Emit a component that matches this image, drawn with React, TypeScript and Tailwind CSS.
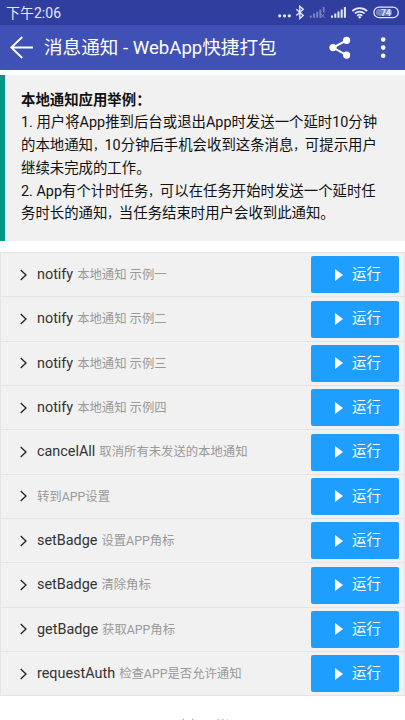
type Demo = {
  name?: string;
  desc: string;
};

const demos: Demo[] = [
  { name: 'notify', desc: '本地通知 示例一' },
  { name: 'notify', desc: '本地通知 示例二' },
  { name: 'notify', desc: '本地通知 示例三' },
  { name: 'notify', desc: '本地通知 示例四' },
  { name: 'cancelAll', desc: '取消所有未发送的本地通知' },
  { desc: '转到APP设置' },
  { name: 'setBadge', desc: '设置APP角标' },
  { name: 'setBadge', desc: '清除角标' },
  { name: 'getBadge', desc: '获取APP角标' },
  { name: 'requestAuth', desc: '检查APP是否允许通知' },
];

function StatusBar() {
  return (
    <div className="flex h-[25px] items-center bg-[#303f9f] pl-[6px] text-[#e4e8fb]">
      <span className="flex-1 text-[14px] leading-[26px]">下午2:06</span>
      <svg className="h-[25px] w-[135px]" viewBox="0 0 135 25" fill="currentColor">
        <circle cx="9.7" cy="15.8" r="1.6" />
        <circle cx="14.5" cy="15.8" r="1.6" />
        <circle cx="19.3" cy="15.8" r="1.6" />
        <path d="M26.4 9.2l6.8 6.2-3.4 3V6.2l3.4 3-6.8 6.2" fill="none" stroke="currentColor" strokeWidth="1.4" />
        <g opacity="0.4">
          <path d="M39.8 15.6h2v2.2h-2zM43 13.6h2v4.2h-2zM46.2 11.8h2v6h-2zM49.4 9.6h1.8v8.2h-1.8zM52.8 7h1.7v5.5h-1.7z" />
          <path d="M50.8 13.8l3.6 4M54.4 13.8l-3.6 4" stroke="currentColor" strokeWidth="1" />
        </g>
        <path d="M61 15.6h2v2.2h-2zM64.3 13.6h2v4.2h-2zM67.5 11.6h2v6.2h-2zM70.7 9.4h2v8.4h-2zM73.9 7h2v10.8h-2z" />
        <g fill="none" stroke="currentColor" strokeWidth="1.7">
          <path d="M82.3 11.1a10.6 10.6 0 0 1 14.8 0" />
          <path d="M84.8 13.5a7.1 7.1 0 0 1 9.8 0" />
          <path d="M87.2 15.8a3.7 3.7 0 0 1 5 0" />
        </g>
        <circle cx="89.7" cy="17.2" r="1.2" />
        <rect x="103.9" y="7.1" width="24.4" height="10.6" rx="5.3" fill="none" stroke="currentColor" strokeWidth="1.3" />
        <rect x="106" y="9" width="16" height="6.8" rx="3" opacity="0.4" />
        <text x="116" y="15.6" textAnchor="middle" fontSize="8.5" fontWeight="700">74</text>
      </svg>
    </div>
  );
}

function AppBar() {
  return (
    <header className="flex h-[45px] items-center bg-[#3f51b5] text-white">
      <svg className="h-[45px] w-[44px]" viewBox="0 0 44 45" fill="none" stroke="currentColor" strokeWidth="1.8">
        <path d="M22.3 12L11.3 22.5l11 10.5M11.3 22.5H33" />
      </svg>
      <h1 className="flex-1 whitespace-nowrap pt-[2px] text-[18.6px]">消息通知 - WebApp快捷打包</h1>
      <svg className="h-[45px] w-[85px]" viewBox="0 0 85 45" fill="currentColor">
        <path d="M26.5 15.3L13 22.6l13.5 7.6" fill="none" stroke="currentColor" strokeWidth="1.9" />
        <circle cx="26.6" cy="15.3" r="3.6" />
        <circle cx="13" cy="22.6" r="3.6" />
        <circle cx="26.6" cy="30.1" r="3.6" />
        <circle cx="63.2" cy="14.5" r="2.3" />
        <circle cx="63.2" cy="22.6" r="2.3" />
        <circle cx="63.2" cy="30.8" r="2.3" />
      </svg>
    </header>
  );
}

// full-width comma set slightly narrower than the text around it
function Comma() {
  return <span className="text-[11.5px] leading-none">，</span>;
}

function Notice() {
  return (
    <section className="mt-[4.5px] h-[166.5px] whitespace-nowrap border-l-[5px] border-[#009688] bg-[#f1f1f1] pl-4 pt-[15px] text-[14.4px] leading-[22.75px] text-[#111]">
      <p className="font-bold">本地通知应用举例：</p>
      <p>1. 用户将App推到后台或退出App时发送一个延时10分钟</p>
      <p>的本地通知<Comma />10分钟后手机会收到这条消息<Comma />可提示用户</p>
      <p>继续未完成的工作。</p>
      <p>2. App有个计时任务<Comma />可以在任务开始时发送一个延时任</p>
      <p>务时长的通知<Comma />当任务结束时用户会收到此通知。</p>
    </section>
  );
}

function DemoRow({ name, desc }: Demo) {
  return (
    <li className="flex h-[44.35px] items-center border-b border-[#e4e4e4] pl-[19px] pr-[5px]">
      <svg className="mr-[10px] h-3 w-[7px]" viewBox="0 0 7 12" fill="none" stroke="#222" strokeWidth="1.3">
        <path d="M.7 1l5.3 5-5.3 5" />
      </svg>
      <div className="flex-1 whitespace-nowrap text-[14.4px] text-[#333]">
        {name && <span className="mr-1">{name}</span>}
        <span className="text-[12.35px] text-[#999]">{desc}</span>
      </div>
      <button className="flex h-[37px] w-[88px] items-center rounded-[2px] bg-[#1e9fff] pl-6 text-[14.4px] text-white">
        <svg className="mr-[9px] h-3 w-2" viewBox="0 0 8 12" fill="currentColor">
          <path d="M0 0l8 6-8 6z" />
        </svg>
        运行
      </button>
    </li>
  );
}

export default function App() {
  return (
    <div className="h-[720px] w-[405px] overflow-hidden bg-white font-['Roboto','Noto_Sans_CJK_SC',sans-serif]">
      <StatusBar />
      <AppBar />
      <Notice />
      <ul className="mt-[11px] border-x border-t border-[#e4e4e4] bg-[#f1f1f1]">
        {demos.map((demo, i) => (
          <DemoRow key={i} {...demo} />
        ))}
      </ul>
      {/* top edge of the footer, cut off by the screen */}
      <svg className="mx-auto mt-[22px] h-1 w-[50px]" viewBox="0 0 50 4" stroke="#999" strokeWidth="1">
        <path d="M5 .8l1 2M15 .8l-1 2M40 1v2M45 1v2M50 1v2" />
      </svg>
    </div>
  );
}
